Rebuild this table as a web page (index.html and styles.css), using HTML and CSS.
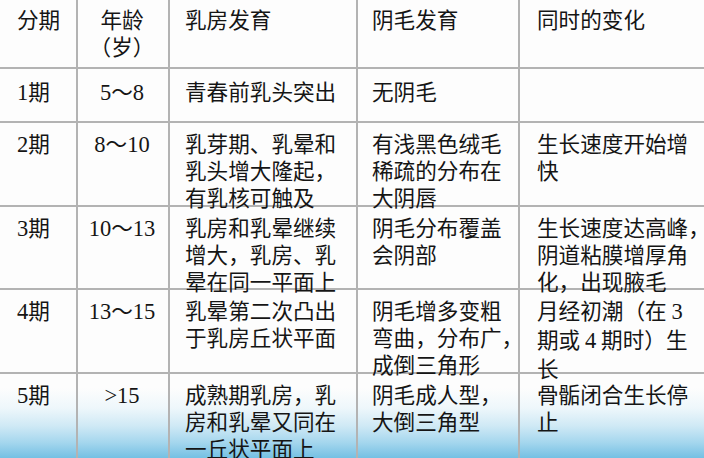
FILE: index.html
```html
<!DOCTYPE html>
<html lang="zh-CN">
<head>
<meta charset="utf-8">
<title>女性青春期发育分期</title>
<link rel="stylesheet" href="styles.css">
</head>
<body>
<div class="sheet">
  <div class="table">
    <div class="cell c1 head">分期</div>
    <div class="cell c2 head">年龄<br>（岁）</div>
    <div class="cell c3 head">乳房发育</div>
    <div class="cell c4 head">阴毛发育</div>
    <div class="cell c5 head">同时的变化</div>

    <div class="cell c1 r1"><span class="num">1</span>期</div>
    <div class="cell c2 r1"><span class="num">5</span>～<span class="num">8</span></div>
    <div class="cell c3 r1">青春前乳头突出</div>
    <div class="cell c4 r1">无阴毛</div>
    <div class="cell c5 r1"></div>

    <div class="cell c1"><span class="num">2</span>期</div>
    <div class="cell c2"><span class="num">8</span>～<span class="num">10</span></div>
    <div class="cell c3">乳芽期、乳晕和<br>乳头增大隆起，<br>有乳核可触及</div>
    <div class="cell c4">有浅黑色绒毛<br>稀疏的分布在<br>大阴唇</div>
    <div class="cell c5">生长速度开始增<br>快</div>

    <div class="cell c1"><span class="num">3</span>期</div>
    <div class="cell c2"><span class="num">10</span>～<span class="num">13</span></div>
    <div class="cell c3">乳房和乳晕继续<br>增大，乳房、乳<br>晕在同一平面上</div>
    <div class="cell c4">阴毛分布覆盖<br>会阴部</div>
    <div class="cell c5">生长速度达高峰，<br>阴道粘膜增厚角<br>化，出现腋毛</div>

    <div class="cell c1"><span class="num">4</span>期</div>
    <div class="cell c2"><span class="num">13</span>～<span class="num">15</span></div>
    <div class="cell c3">乳晕第二次凸出<br>于乳房丘状平面</div>
    <div class="cell c4">阴毛增多变粗<br>弯曲，分布广，<br>成倒三角形</div>
    <div class="cell c5">月经初潮（在 <span class="num">3</span><br>期或 <span class="num">4</span> 期时）生<br>长</div>

    <div class="cell c1 last"><span class="num">5</span>期</div>
    <div class="cell c2 last"><span class="num">&gt;15</span></div>
    <div class="cell c3 last">成熟期乳房，乳<br>房和乳晕又同在<br>一丘状平面上</div>
    <div class="cell c4 last">阴毛成人型，<br>大倒三角型</div>
    <div class="cell c5 last">骨骺闭合生长停<br>止</div>
  </div>
</div>
</body>
</html>
```

FILE: styles.css
```css
* { box-sizing: border-box; }

html, body {
  margin: 0;
  padding: 0;
}

body {
  width: 704px;
  height: 458px;
  overflow: hidden;
  font-family: "Noto Sans CJK SC", "Noto Sans", sans-serif;
  color: #151515;
}

.sheet {
  width: 704px;
  height: 458px;
  background: linear-gradient(to bottom,
    #fdfdfd 0px,
    #fdfdfd 388px,
    #eef7fb 408px,
    #cfe9f5 426px,
    #a6d7ee 442px,
    #74c0e3 458px);
}

.table {
  display: grid;
  grid-template-columns: 78px 92px 188px 162px 184px;
  grid-template-rows: 69px 54px 84px 83px 84px 84px;
  height: 458px;
}

.cell {
  border-right: 2px solid #b3b3b3;
  border-bottom: 2px solid #b3b3b3;
  font-size: 21.6px;
  line-height: 27px;
  padding-top: 6px;
  white-space: nowrap;
}

.c5 { border-right: none; }
.last { border-bottom: none; }

.r1 { padding-top: 8px; }
.head { padding-top: 5px; }

.c1 { padding-left: 17px; }
.c2 { text-align: center; padding-right: 2px; }
.c3 { padding-left: 15px; }
.c4 { padding-left: 14px; }
.c5 { padding-left: 17px; }

.num {
  font-family: "Liberation Serif", "Times New Roman", serif;
  font-size: 22.5px;
}
```
